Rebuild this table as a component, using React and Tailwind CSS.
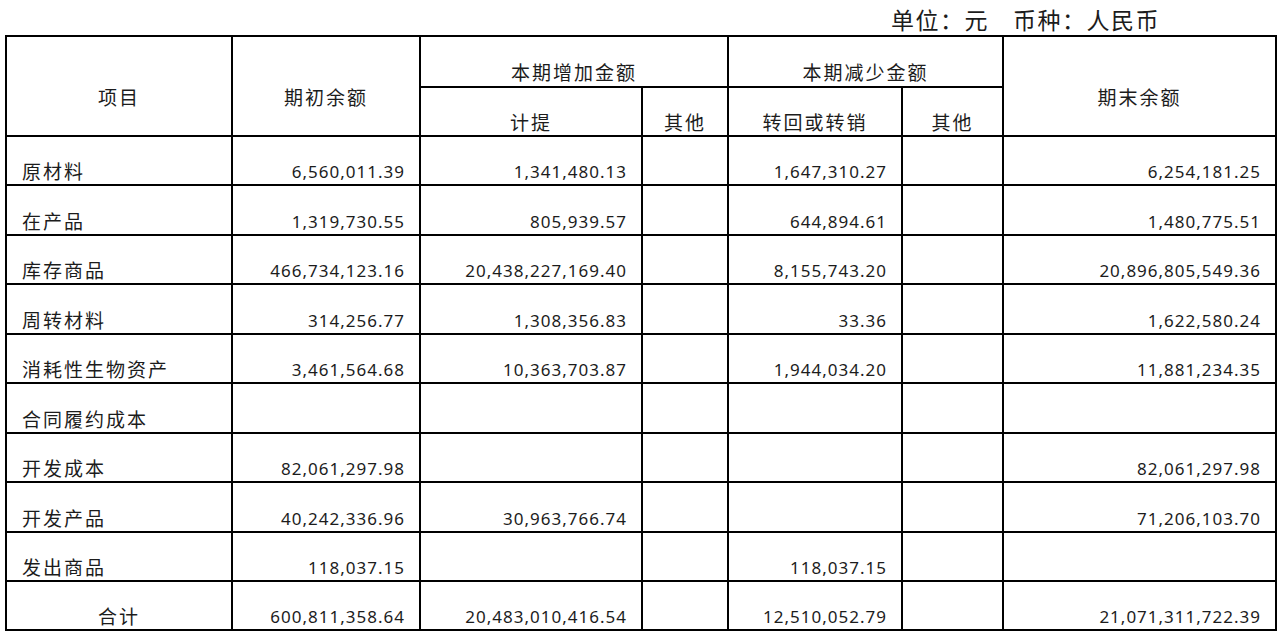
import React from "react";

const rows = [
  ["原材料", "6,560,011.39", "1,341,480.13", "", "1,647,310.27", "", "6,254,181.25"],
  ["在产品", "1,319,730.55", "805,939.57", "", "644,894.61", "", "1,480,775.51"],
  ["库存商品", "466,734,123.16", "20,438,227,169.40", "", "8,155,743.20", "", "20,896,805,549.36"],
  ["周转材料", "314,256.77", "1,308,356.83", "", "33.36", "", "1,622,580.24"],
  ["消耗性生物资产", "3,461,564.68", "10,363,703.87", "", "1,944,034.20", "", "11,881,234.35"],
  ["合同履约成本", "", "", "", "", "", ""],
  ["开发成本", "82,061,297.98", "", "", "", "", "82,061,297.98"],
  ["开发产品", "40,242,336.96", "30,963,766.74", "", "", "", "71,206,103.70"],
  ["发出商品", "118,037.15", "", "", "118,037.15", "", ""],
  ["合计", "600,811,358.64", "20,483,010,416.54", "", "12,510,052.79", "", "21,071,311,722.39"],
];

const heights = ["h-[49px]", "h-[50px]", "h-[49px]", "h-[50px]", "h-[49px]", "h-[50px]", "h-[49px]", "h-[50px]", "h-[49px]", "h-[49px]"];

const cell = "border-2 border-black align-middle pb-0 leading-none";
const cjk = "pt-[20px] text-[19px] tracking-[2px] font-['Noto_Sans_CJK_SC',sans-serif]";
const num = "pt-[22px] text-[17px] tracking-[1px] text-right pr-[14px] font-['Noto_Sans',sans-serif]";

export default function App() {
  return (
    <div className="w-[1280px] h-[638px] bg-white text-[#1c1c1c] font-['Noto_Sans_CJK_SC',sans-serif]">
      <div className="h-[35px] flex justify-end items-start pt-[8px] pr-[120px] text-[23px] tracking-[1.5px] leading-none">
        <span>单位：元</span>
        <span className="ml-[24px]">币种：人民币</span>
      </div>
      <table className="table-fixed border-collapse w-[1270px] ml-[5px]">
        <colgroup>
          <col className="w-[226px]" />
          <col className="w-[188px]" />
          <col className="w-[222px]" />
          <col className="w-[86px]" />
          <col className="w-[174px]" />
          <col className="w-[101px]" />
          <col className="w-[273px]" />
        </colgroup>
        <thead>
          <tr className="h-[51px]">
            <th rowSpan={2} className={`${cell} ${cjk} font-normal text-center`}>项目</th>
            <th rowSpan={2} className={`${cell} ${cjk} font-normal text-center`}>期初余额</th>
            <th colSpan={2} className={`${cell} ${cjk} font-normal text-center`}>本期增加金额</th>
            <th colSpan={2} className={`${cell} ${cjk} font-normal text-center`}>本期减少金额</th>
            <th rowSpan={2} className={`${cell} ${cjk} font-normal text-center`}>期末余额</th>
          </tr>
          <tr className="h-[49px]">
            <th className={`${cell} ${cjk} font-normal text-center`}>计提</th>
            <th className={`${cell} ${cjk} font-normal text-center`}>其他</th>
            <th className={`${cell} ${cjk} font-normal text-center`}>转回或转销</th>
            <th className={`${cell} ${cjk} font-normal text-center`}>其他</th>
          </tr>
        </thead>
        <tbody>
          {rows.map((r, i) => (
            <tr key={r[0]} className={heights[i]}>
              <td className={`${cell} ${cjk} ${i === rows.length - 1 ? "text-center" : "text-left pl-[15px]"}`}>{r[0]}</td>
              {r.slice(1).map((v, j) => (
                <td key={j} className={`${cell} ${num}`}>{v}</td>
              ))}
            </tr>
          ))}
        </tbody>
      </table>
    </div>
  );
}
